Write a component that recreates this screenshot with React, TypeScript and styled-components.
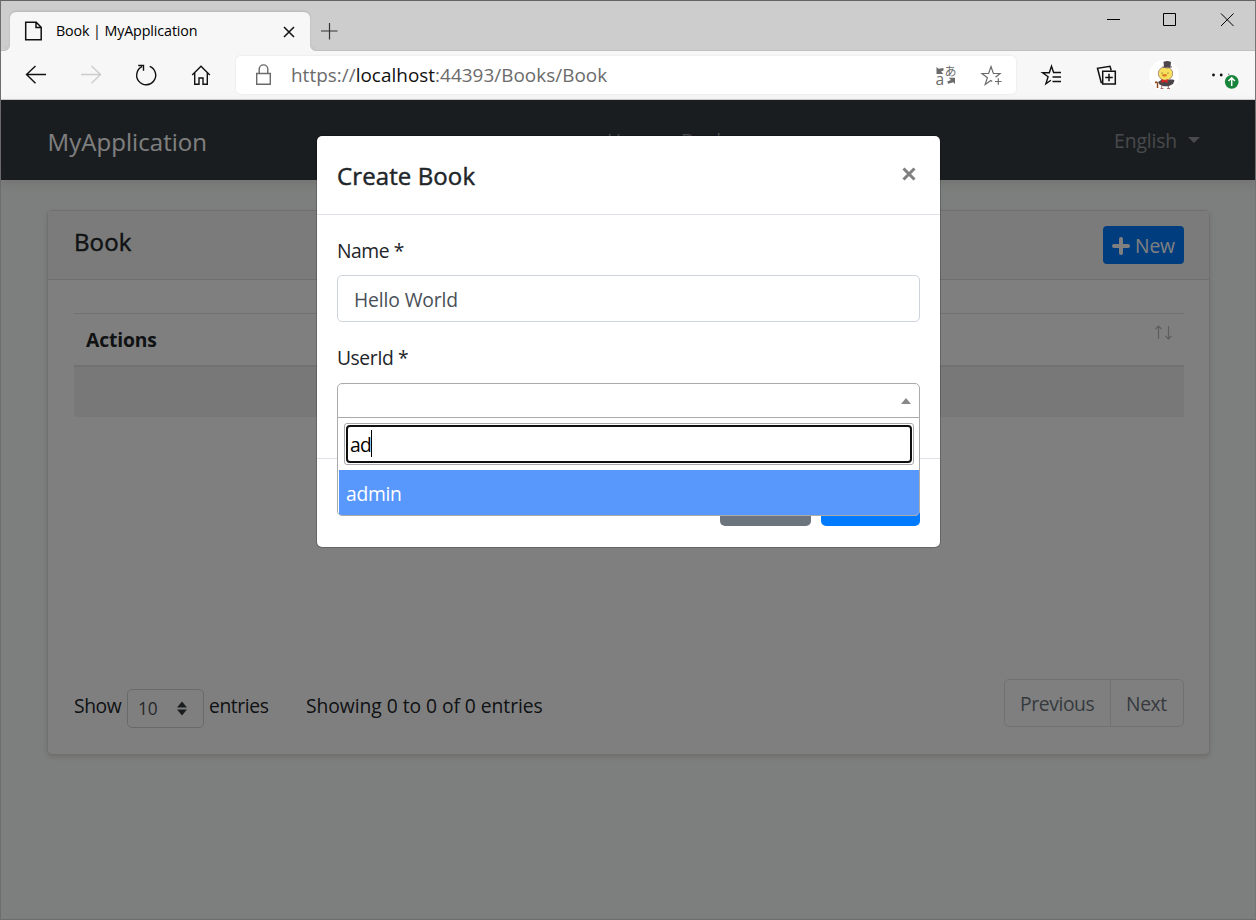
import React from "react";
import styled, { createGlobalStyle } from "styled-components";

const GlobalStyle = createGlobalStyle`
  *, *::before, *::after { box-sizing: border-box; }
  body { margin: 0; overflow: hidden; }
  button, input { font: inherit; letter-spacing: inherit; margin: 0; }
`;

const Window = styled.div`
  width: 1256px;
  height: 920px;
  display: flex;
  flex-direction: column;
  border: 1px solid #6e6e6e;
  border-top-color: #666264;
  border-right-color: #747574;
  border-bottom-color: #6c6e6d;
  font-family: "Open Sans", "Noto Sans", "Noto Sans CJK JP", sans-serif;
  font-size: 19.3px;
  letter-spacing: -0.12px;
  line-height: 30px;
  color: #212529;
`;

/* ---------- browser chrome ---------- */

const TabStrip = styled.div`
  height: 50px;
  flex: none;
  display: flex;
  align-items: flex-end;
  padding-left: 9px;
  background: linear-gradient(#cdcdcd 49px, #c0c0c0 49px);
`;

const Tab = styled.div`
  position: relative;
  width: 300px;
  height: 39px;
  display: flex;
  align-items: center;
  padding: 0 11px 2px 14px;
  border-radius: 6px 6px 0 0;
  background: #f7f7f7;
  box-shadow: 0 -1px 2px rgba(0, 0, 0, 0.12);
  color: #000;
  &::before, &::after {
    content: "";
    position: absolute;
    bottom: 0;
    width: 5px;
    height: 5px;
  }
  &::before { left: -5px; background: radial-gradient(circle at 0 0, #c8c8c8 4.5px, #f7f7f7 5px); }
  &::after { right: -5px; background: radial-gradient(circle at 100% 0, #c8c8c8 4.5px, #f7f7f7 5px); }
`;

const TabTitle = styled.span`
  flex: 1;
  margin-left: 11px;
  font-size: 14.3px;
  letter-spacing: -0.12px;
`;

const NewTab = styled.div`
  width: 38px;
  height: 39px;
  display: flex;
  align-items: center;
  justify-content: center;
`;

const WindowControls = styled.div`
  align-self: flex-start;
  display: flex;
  margin-left: auto;
`;

const WindowControl = styled.div`
  width: 57px;
  height: 37px;
  display: flex;
  align-items: center;
  justify-content: center;
`;

const Toolbar = styled.div`
  height: 49px;
  flex: none;
  display: flex;
  align-items: center;
  padding-left: 7.5px;
  background: #f7f7f7;
  border-bottom: 1px solid #cfcfcf;
`;

const ToolButton = styled.div<{ $w?: number }>`
  width: ${(p) => p.$w ?? 55}px;
  height: 48px;
  flex: none;
  display: flex;
  align-items: center;
  justify-content: center;
`;

const AddressBar = styled.div`
  width: 780px;
  height: 38px;
  flex: none;
  display: flex;
  align-items: center;
  margin: 0 7.5px;
  padding-left: 12px;
  border-radius: 5px;
  background: #fff;
  box-shadow: 0 0 3px rgba(0, 0, 0, 0.08);
`;

const Url = styled.span`
  flex: 1;
  margin-left: 12px;
  font-size: 18.9px;
  letter-spacing: 0.03px;
  color: #6b6b6b;
  b { font-weight: 400; color: #111; }
`;

/* ---------- application page ---------- */

const Page = styled.div`
  position: relative;
  flex: 1;
  display: flex;
  flex-direction: column;
  background: #f9fefb;
`;

const Navbar = styled.nav`
  height: 80px;
  flex: none;
  display: flex;
  align-items: center;
  padding: 2px 55px 0 46.5px;
  background: #343a40;
  box-shadow: 0 3px 10px rgba(60, 0, 0, 0.1);
  color: #919497;
`;

const Brand = styled.span`
  width: 559.5px;
  font-size: 24px;
  letter-spacing: 0.06px;
  line-height: 36px;
  padding-top: 2px;
  color: #fff;
`;

const NavLink = styled.span`
  width: 74px;
`;

const Language = styled.span`
  display: flex;
  align-items: center;
  gap: 11px;
  margin-left: auto;
  &::after {
    content: "";
    margin-bottom: 3px;
    border: 6px solid transparent;
    border-top-color: currentColor;
    border-bottom: 0;
  }
`;

const Card = styled.section`
  width: 1163px;
  height: 545px;
  display: flex;
  flex-direction: column;
  margin: 30px 0 0 46px;
  border: 1px solid #e0e0e0;
  border-radius: 5px;
  background: #fff;
  box-shadow: 0 2px 5px rgba(80, 0, 0, 0.13);
`;

const CardHeader = styled.header`
  height: 69px;
  flex: none;
  display: flex;
  justify-content: space-between;
  padding: 15px 25px 0 26px;
  background: #f7f7f7;
  border-bottom: 1px solid #dfdfdf;
`;

const Heading = styled.h5`
  margin: 0;
  font-size: 24px;
  font-weight: 400;
  letter-spacing: 0.1px;
  -webkit-text-stroke: 0.45px currentColor;
`;

const CardTitle = styled(Heading)`
  line-height: 32px;
`;

const NewButton = styled.button`
  width: 81px;
  height: 38px;
  display: flex;
  align-items: center;
  gap: 5px;
  padding: 2px 0 0 9px;
  border: 0;
  border-radius: 4px;
  background: #007bff;
  color: #fff;
`;

const CardBody = styled.div`
  flex: 1;
  display: flex;
  flex-direction: column;
  justify-content: space-between;
  padding: 33px 25px 26px 26px;
`;

const TableHead = styled.div`
  height: 54px;
  display: flex;
  justify-content: space-between;
  padding: 11px 12px 0 12px;
  border-top: 1px solid #dee2e6;
  border-bottom: 2px solid #dee2e6;
  font-weight: 700;
`;

const EmptyRow = styled.div`
  height: 50px;
  background: #f1f1f1;
`;

const TableFooter = styled.div`
  height: 49px;
  display: flex;
  align-items: flex-end;
`;

const FooterText = styled.span<{ $w: number; $tight?: boolean }>`
  width: ${(p) => p.$w}px;
  line-height: 44px;
  white-space: nowrap;
  letter-spacing: ${(p) => (p.$tight ? -0.4 : -0.05)}px;
`;

const LengthSelect = styled.span`
  width: 77px;
  height: 39px;
  display: flex;
  align-items: center;
  justify-content: space-between;
  margin-right: 5px;
  padding: 0 15px 0 10px;
  border: 1px solid #ced4da;
  border-radius: 5px;
  font-size: 17.3px;
  color: #495057;
`;

const Pagination = styled.div`
  align-self: flex-start;
  height: 48px;
  display: flex;
  margin-left: auto;
  border: 1px solid #dee2e6;
  border-radius: 5px;
  letter-spacing: -0.38px;
  color: #6c757d;
`;

const PageLink = styled.span<{ $w: number }>`
  width: ${(p) => p.$w}px;
  padding: 9px 0 0 15px;
  & + & { border-left: 1px solid #dee2e6; }
`;

/* ---------- modal ---------- */

const Backdrop = styled.div`
  position: absolute;
  inset: 0;
  background: rgba(0, 0, 0, 0.5);
`;

const Dialog = styled.div`
  width: 625px;
  height: 413px;
  display: flex;
  flex-direction: column;
  margin: 35px 0 0 315px;
  border: 1px solid rgba(0, 0, 0, 0.2);
  border-radius: 6px;
  background: #fff;
  background-clip: padding-box;
`;

const DialogHeader = styled.header`
  height: 79px;
  display: flex;
  justify-content: space-between;
  padding: 22px 22px 0 20px;
  border-bottom: 1px solid #dee2e6;
`;

const DialogTitle = styled(Heading)`
  line-height: 36px;
`;

const DialogBody = styled.div`
  height: 244px;
  padding: 21px 20px 0;
  border-bottom: 1px solid #dee2e6;
`;

const Label = styled.label`
  display: block;
  height: 39px;
  letter-spacing: -0.45px;
`;

const TextInput = styled.input`
  display: block;
  width: 583px;
  height: 47px;
  margin-bottom: 21px;
  padding: 2px 16px 0;
  border: 1px solid #ced4da;
  border-radius: 5px;
  outline: 0;
  color: #495057;
`;

const Select = styled.div`
  position: relative;
  width: 583px;
  height: 35px;
  margin-top: 1px;
  border: 1px solid #aaa;
  border-radius: 5px 5px 0 0;
  &::after {
    content: "";
    position: absolute;
    right: 8px;
    top: 14px;
    border: 5px solid transparent;
    border-bottom: 6px solid #888;
    border-top: 0;
  }
`;

const Dropdown = styled.div`
  position: absolute;
  z-index: 1;
  top: 33px;
  left: -1px;
  width: 583px;
  height: 99px;
  border: 1px solid #aaa;
  border-radius: 0 0 5px 5px;
  background: #fff;
  overflow: hidden;
`;

const Search = styled.div`
  height: 42px;
  margin: 5px 5px 5px 6px;
  padding: 1px;
  border: 1px solid #aaa;
  border-radius: 3px;
`;

const SearchField = styled.div`
  height: 38px;
  display: flex;
  align-items: center;
  padding: 2px 0 0 2px;
  border: 2px solid #101010;
  border-radius: 4px;
  letter-spacing: -0.7px;
  color: #000;
  &::after {
    content: "";
    width: 1px;
    height: 27px;
    margin-top: -3px;
    background: #000;
  }
`;

const Option = styled.div`
  height: 45px;
  margin-left: 1px;
  padding: 9px 7px 0;
  background: #5897fb;
  letter-spacing: -0.3px;
  color: #fff;
`;

const DialogFooter = styled.footer`
  flex: 1;
  display: flex;
  justify-content: flex-end;
  gap: 10px;
  padding: 19px 20px 21px;
`;

const FooterButton = styled.button<{ $w: number; $bg: string }>`
  width: ${(p) => p.$w}px;
  border: 0;
  border-radius: 5px;
  background: ${(p) => p.$bg};
  color: #fff;
`;

/* ---------- icons ---------- */

const Icon = ({ size = 30, w, color = "#111", sw = 1.4, children }: {
  size?: number; w?: number; color?: string; sw?: number; children: React.ReactNode;
}) => (
  <svg width={w ?? size} height={size} viewBox={`0 0 ${w ?? size} ${size}`} fill="none" stroke={color} strokeWidth={sw}>
    {children}
  </svg>
);

const Avatar = () => (
  <svg width="30" height="30" viewBox="0 0 30 30">
    <circle cx="15" cy="15" r="15" fill="#fff" />
    <path d="M13 24l-.5 4.500M19 24l.5 4.500M11.500 28.500h3M18 28.500h3" stroke="#a06060" strokeWidth=".9" fill="none" />
    <path d="M9 22l4-2.500h7l4 0 1.500 1-1.500 3.500-4.500 2.200h-5l-4-1.700z" fill="#4c4448" />
    <path d="M8.500 28v-5q-2-2-2 .200" stroke="#8e4a22" strokeWidth="1.500" fill="none" />
    <ellipse cx="16.500" cy="13.500" rx="7.200" ry="6.800" fill="#f7e05c" stroke="#9b7b70" strokeWidth=".8" />
    <path d="M14.500 1.800q4-1.500 7.500 .200l-.500 5h-6.500z" fill="#4d474d" />
    <path d="M13.500 7q5 2 9.500-.200" stroke="#6b5b68" strokeWidth="1" fill="none" />
    <circle cx="13" cy="13" r=".6" fill="#513b24" />
    <circle cx="19" cy="13" r=".6" fill="#513b24" />
    <ellipse cx="15.500" cy="15.300" rx="2.600" ry="1.400" fill="#d98028" />
    <path d="M12.500 19l3 1.400 3-1.400v4l-3-1.400-3 1.400z" fill="#e02020" />
  </svg>
);

const MoreMenu = () => (
  <svg width="40" height="30" viewBox="0 0 40 30">
    <circle cx="8.500" cy="15" r="1.400" fill="#111" />
    <circle cx="16.200" cy="15" r="1.400" fill="#111" />
    <circle cx="23.700" cy="14.200" r=".7" fill="#777" />
    <circle cx="26.700" cy="21.800" r="6.900" fill="#16853b" />
    <path d="M26.700 26v-8M23.500 21l3.200-3.200 3.200 3.200" stroke="#fff" strokeWidth="1.500" fill="none" />
  </svg>
);

export default function App() {
  return (
    <>
      <GlobalStyle />
      <Window>
        <TabStrip>
          <Tab>
            <Icon w={21} size={22}>
              <path d="M1.700 2.200h10.500l5 5v12.600h-15.500z M12 2.200v5.200h5.200" strokeWidth="1.500" />
            </Icon>
            <TabTitle>Book | MyApplication</TabTitle>
            <Icon size={20} sw={1.5}><path d="M5 6l10 10M15 6l-10 10" /></Icon>
          </Tab>
          <NewTab>
            <Icon size={20} sw={1.2} color="#333"><path d="M10.500 1v16.500M2 9h16.500" /></Icon>
          </NewTab>
          <WindowControls>
            <WindowControl><Icon size={15} sw={1} color="#000"><path d="M2 7.500h13" /></Icon></WindowControl>
            <WindowControl><Icon size={15} sw={1} color="#000"><path d="M1.500 1.500h12v12h-12z" /></Icon></WindowControl>
            <WindowControl><Icon size={15} sw={1} color="#000"><path d="M2 1.500l12.500 12.500M14.500 1.500L2 14" /></Icon></WindowControl>
          </WindowControls>
        </TabStrip>

        <Toolbar>
          <ToolButton><Icon><path d="M25 14.500H5.500M14.500 6L5.500 14.500l9 8.700" /></Icon></ToolButton>
          <ToolButton><Icon color="#ccc"><path d="M5 14.500h19.500M15.500 6l9 8.500-9 8.700" /></Icon></ToolButton>
          <ToolButton><Icon><path d="M18.700 6.400A9.500 9.500 0 1 1 11 6.700M7.200 5.500h5.300v5.300" /></Icon></ToolButton>
          <ToolButton><Icon><path d="M6.200 15L15 6.300l8.800 8.700M8.700 13v11.300h4.300v-6.300h4v6.300h4.300V13" /></Icon></ToolButton>
          <AddressBar>
            <Icon w={31} color="#6b6b6b"><path d="M8.700 13.500h13.600v10.800H8.700zM11.200 13.500V9.200a4.300 4.300 0 0 1 8.600 0v4.300" /></Icon>
            <Url>https://<b>localhost</b>:44393/Books/Book</Url>
            <svg width="46" height="30" viewBox="0 0 46 30" fill="#6b6b6b">
              <text x="11.500" y="24.500" fontSize="15.500">a</text>
              <text x="20.500" y="15.800" fontSize="12" fontFamily="Noto Sans CJK JP">あ</text>
              <path d="M12.500 7l2 1.700L19.500 8v2.500l-2.500 1 2.500 2.500h-7zM31 24l-1.800-1.800-5 1.500-1-2.200 3.800-1.500-2.300-2.200h6.300z" />
            </svg>
            <Icon w={46} color="#6b6b6b" sw={1.200}>
              <path d="M25.500 17.200l4.500-3.700h-6.600L21 6.500l-2.400 7H12l5.400 4.200-2.200 6.700 5.600-4 1.400 1M28.300 18.300v6.400M25 21.500h6.500" />
            </Icon>
          </AddressBar>
          <ToolButton $w={56}><Icon><path d="M16.500 12.300L14.500 6.200l-2.200 6.600H5.600l5.500 4-2.200 7 5-3.600M16 12.500H24M15.500 17H24M15.500 21.500H24" /></Icon></ToolButton>
          <ToolButton $w={55}><Icon sw={1.500}><path d="M10.500 22.500H9.200L5.500 8.300l12.500-2 1.200 4M10.700 11.300h12.600v12.600H10.700zM17 13.800v7.500M13.200 17.600h7.600" /></Icon></ToolButton>
          <ToolButton $w={59}><Avatar /></ToolButton>
          <ToolButton $w={62}><MoreMenu /></ToolButton>
        </Toolbar>

        <Page>
          <Navbar>
            <Brand>MyApplication</Brand>
            <NavLink>Home</NavLink>
            <NavLink>Book</NavLink>
            <Language>English</Language>
          </Navbar>

          <Card>
            <CardHeader>
              <CardTitle>Book</CardTitle>
              <NewButton>
                <Icon size={18} color="#fff" sw={4}><path strokeLinecap="round" d="M9 2v14M2 9h14" /></Icon>
                New
              </NewButton>
            </CardHeader>
            <CardBody>
              <div>
                <TableHead>
                  Actions
                  <Icon w={18} size={16} color="#bbb" sw={1.200}>
                    <path d="M4.500 14V1M1.500 4l3-3 3 3M14.500 1v13M11.500 11l3 3 3-3" />
                  </Icon>
                </TableHead>
                <EmptyRow />
              </div>
              <TableFooter>
                <FooterText $w={53} $tight>Show</FooterText>
                <LengthSelect>
                  10
                  <svg width="12" height="15" viewBox="0 0 12 15" fill="#343a40">
                    <path d="M6 .500l5 6H1zM6 14.500l5-6H1z" />
                  </svg>
                </LengthSelect>
                <FooterText $w={97} $tight>entries</FooterText>
                <FooterText $w={240}>Showing 0 to 0 of 0 entries</FooterText>
                <Pagination>
                  <PageLink $w={105}>Previous</PageLink>
                  <PageLink $w={73}>Next</PageLink>
                </Pagination>
              </TableFooter>
            </CardBody>
          </Card>

          <Backdrop>
            <Dialog>
              <DialogHeader>
                <DialogTitle>Create Book</DialogTitle>
                <Icon size={36} w={18} color="#7f7f7f" sw={3}><path d="M3.500 10.500l11 11M14.500 10.500l-11 11" /></Icon>
              </DialogHeader>
              <DialogBody>
                <Label>Name *</Label>
                <TextInput defaultValue="Hello World" />
                <Label>UserId *</Label>
                <Select>
                  <Dropdown>
                    <Search><SearchField>ad</SearchField></Search>
                    <Option>admin</Option>
                  </Dropdown>
                </Select>
              </DialogBody>
              <DialogFooter>
                <FooterButton $w={91} $bg="#6c757d" />
                <FooterButton $w={99} $bg="#007bff" />
              </DialogFooter>
            </Dialog>
          </Backdrop>
        </Page>
      </Window>
    </>
  );
}
